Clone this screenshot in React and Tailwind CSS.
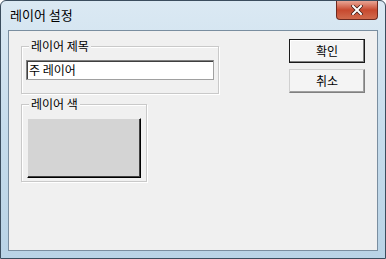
import React from 'react';

const font = { fontFamily: '"Noto Sans CJK KR", "Liberation Sans", sans-serif' };

const GroupBox = ({ label, className, children }) => (
  <div className={`relative border border-[#c9c9c9] shadow-[inset_1px_1px_0_#ffffff,1px_1px_0_#ffffff] ${className}`}>
    <span className="absolute -top-[9px] left-[7px] bg-[#f0f0f0] px-[2px] text-[12px] leading-[16px] text-black">
      {label}
    </span>
    {children}
  </div>
);

const Button = ({ children, isDefault }) => (
  <button
    className={`flex h-[24px] w-[76px] items-center justify-center bg-[#f4f4f4] text-[12px] text-black ${
      isDefault
        ? 'border border-[#1a1a1a] shadow-[inset_-1px_-1px_0_#808080,inset_1px_1px_0_#ffffff]'
        : 'border border-[#d0d0d0] border-r-[#808080] border-b-[#808080] shadow-[inset_-1px_-1px_0_#a0a0a0]'
    }`}
  >
    {children}
  </button>
);

export default function App() {
  return (
    <div className="h-[259px] w-[386px] bg-white" style={font}>
      <div className="flex h-full w-full flex-col rounded-t-[6px] border border-[#3b4d5e] bg-gradient-to-b from-[#dbe9f3] via-[#c6dcec] to-[#b9d3e6] px-[7px] pb-[7px]">
        {/* title bar */}
        <div className="flex h-[29px] items-start justify-between">
          <span className="mt-[6px] ml-[2px] text-[13px] leading-[16px] text-black">레이어 설정</span>
          <div className="flex h-[19px] w-[42px] items-center justify-center rounded-b-[4px] border border-t-0 border-[#6d2a20] bg-gradient-to-b from-[#e8a595] via-[#c7492f] to-[#d06a4d]">
            <svg width="12" height="10" viewBox="0 0 12 10">
              <path d="M2 1 L10 9 M10 1 L2 9" stroke="#3a1a14" strokeWidth="3.4" strokeLinecap="square" />
              <path d="M2 1 L10 9 M10 1 L2 9" stroke="#ffffff" strokeWidth="2" strokeLinecap="square" />
            </svg>
          </div>
        </div>

        {/* client area */}
        <div className="flex flex-1 border border-[#7a8ea0] bg-[#f0f0f0]">
          <div className="flex flex-col pl-[12px] pt-[15px]">
            <GroupBox label="레이어 제목" className="h-[48px] w-[198px]">
              <div className="mx-[4px] mt-[13px] flex h-[20px] items-center border border-[#a0a0a0] border-t-[#808080] border-l-[#808080] bg-white pl-[2px] text-[12px] text-black shadow-[inset_1px_1px_0_#404040]">
                주 레이어
              </div>
            </GroupBox>
            <GroupBox label="레이어 색" className="mt-[10px] h-[78px] w-[126px]">
              <div className="mx-[5px] mt-[13px] h-[60px] border border-[#f0f0f0] border-r-[#000] border-b-[#000] bg-[#d4d4d4] shadow-[inset_-1px_-1px_0_#404040]" />
            </GroupBox>
          </div>
          <div className="ml-auto mr-[12px] mt-[8px] flex flex-col gap-[6px]">
            <Button isDefault>확인</Button>
            <Button>취소</Button>
          </div>
        </div>
      </div>
    </div>
  );
}
